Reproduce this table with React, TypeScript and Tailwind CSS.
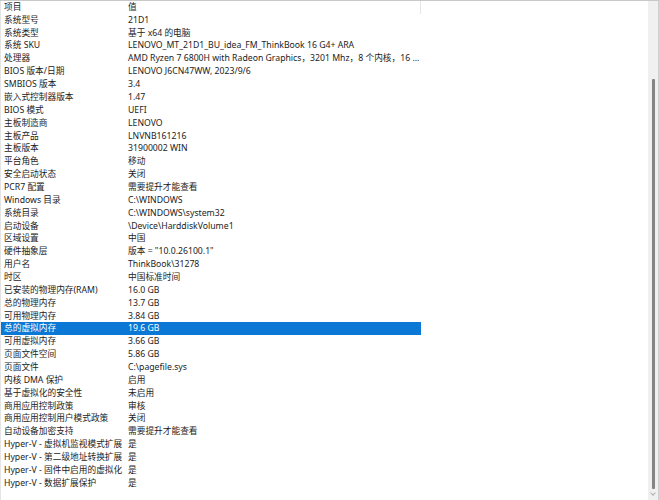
import React from 'react';

const rows: [string, string][] = [
  ['系统型号', '21D1'],
  ['系统类型', '基于 x64 的电脑'],
  ['系统 SKU', 'LENOVO_MT_21D1_BU_idea_FM_ThinkBook 16 G4+ ARA'],
  ['处理器', 'AMD Ryzen 7 6800H with Radeon Graphics，3201 Mhz，8 个内核，16 ...'],
  ['BIOS 版本/日期', 'LENOVO J6CN47WW, 2023/9/6'],
  ['SMBIOS 版本', '3.4'],
  ['嵌入式控制器版本', '1.47'],
  ['BIOS 模式', 'UEFI'],
  ['主板制造商', 'LENOVO'],
  ['主板产品', 'LNVNB161216'],
  ['主板版本', '31900002 WIN'],
  ['平台角色', '移动'],
  ['安全启动状态', '关闭'],
  ['PCR7 配置', '需要提升才能查看'],
  ['Windows 目录', 'C:\\WINDOWS'],
  ['系统目录', 'C:\\WINDOWS\\system32'],
  ['启动设备', '\\Device\\HarddiskVolume1'],
  ['区域设置', '中国'],
  ['硬件抽象层', '版本 = "10.0.26100.1"'],
  ['用户名', 'ThinkBook\\31278'],
  ['时区', '中国标准时间'],
  ['已安装的物理内存(RAM)', '16.0 GB'],
  ['总的物理内存', '13.7 GB'],
  ['可用物理内存', '3.84 GB'],
  ['总的虚拟内存', '19.6 GB'],
  ['可用虚拟内存', '3.66 GB'],
  ['页面文件空间', '5.86 GB'],
  ['页面文件', 'C:\\pagefile.sys'],
  ['内核 DMA 保护', '启用'],
  ['基于虚拟化的安全性', '未启用'],
  ['商用应用控制政策', '审核'],
  ['商用应用控制用户模式政策', '关闭'],
  ['自动设备加密支持', '需要提升才能查看'],
  ['Hyper-V - 虚拟机监视模式扩展', '是'],
  ['Hyper-V - 第二级地址转换扩展', '是'],
  ['Hyper-V - 固件中启用的虚拟化', '是'],
  ['Hyper-V - 数据扩展保护', '是'],
];

const SELECTED = '总的虚拟内存';

export default function App() {
  return (
    <div
      className="w-[659px] h-[500px] bg-white flex overflow-hidden border-t border-[#c8c8c8] text-[8.7px] text-[#1c1c1c]"
      style={{ fontFamily: '"Noto Sans", "Noto Sans CJK SC", sans-serif' }}
    >
      {/* list */}
      <div className="flex-1 flex flex-col border-l border-[#e4e4e4]">
        {/* header */}
        <div className="flex h-[12.86px] items-center shrink-0">
          <div className="w-[124px] pl-[3px]">项目</div>
          <div className="w-[296px] pl-[3px] h-full flex items-center border-r border-[#e6e6e6]">值</div>
        </div>

        {rows.map(([k, v]) => {
          const sel = k === SELECTED;
          return (
            <div key={k} className="flex h-[12.86px] items-center shrink-0">
              <div
                className={`flex w-[420px] h-full items-center ${sel ? 'bg-[#0a78d4] text-white' : ''}`}
              >
                <div className="w-[124px] pl-[3px] whitespace-nowrap overflow-hidden">{k}</div>
                <div className="w-[293px] pl-[3px] whitespace-nowrap">{v}</div>
              </div>
            </div>
          );
        })}
      </div>

      {/* scrollbar */}
      <div className="w-[11px] h-full bg-[#f0f0f0] border-r border-[#cfcfcf] flex flex-col items-center">
        <div className="h-[78px] shrink-0" />
        <div className="w-[3px] h-[410px] bg-[#858585] rounded-[1px]" />
        <div className="mt-[2px] w-[4px] h-[4px] border-l border-b border-[#b0b0b0] rotate-[-45deg]" />
      </div>
    </div>
  );
}
